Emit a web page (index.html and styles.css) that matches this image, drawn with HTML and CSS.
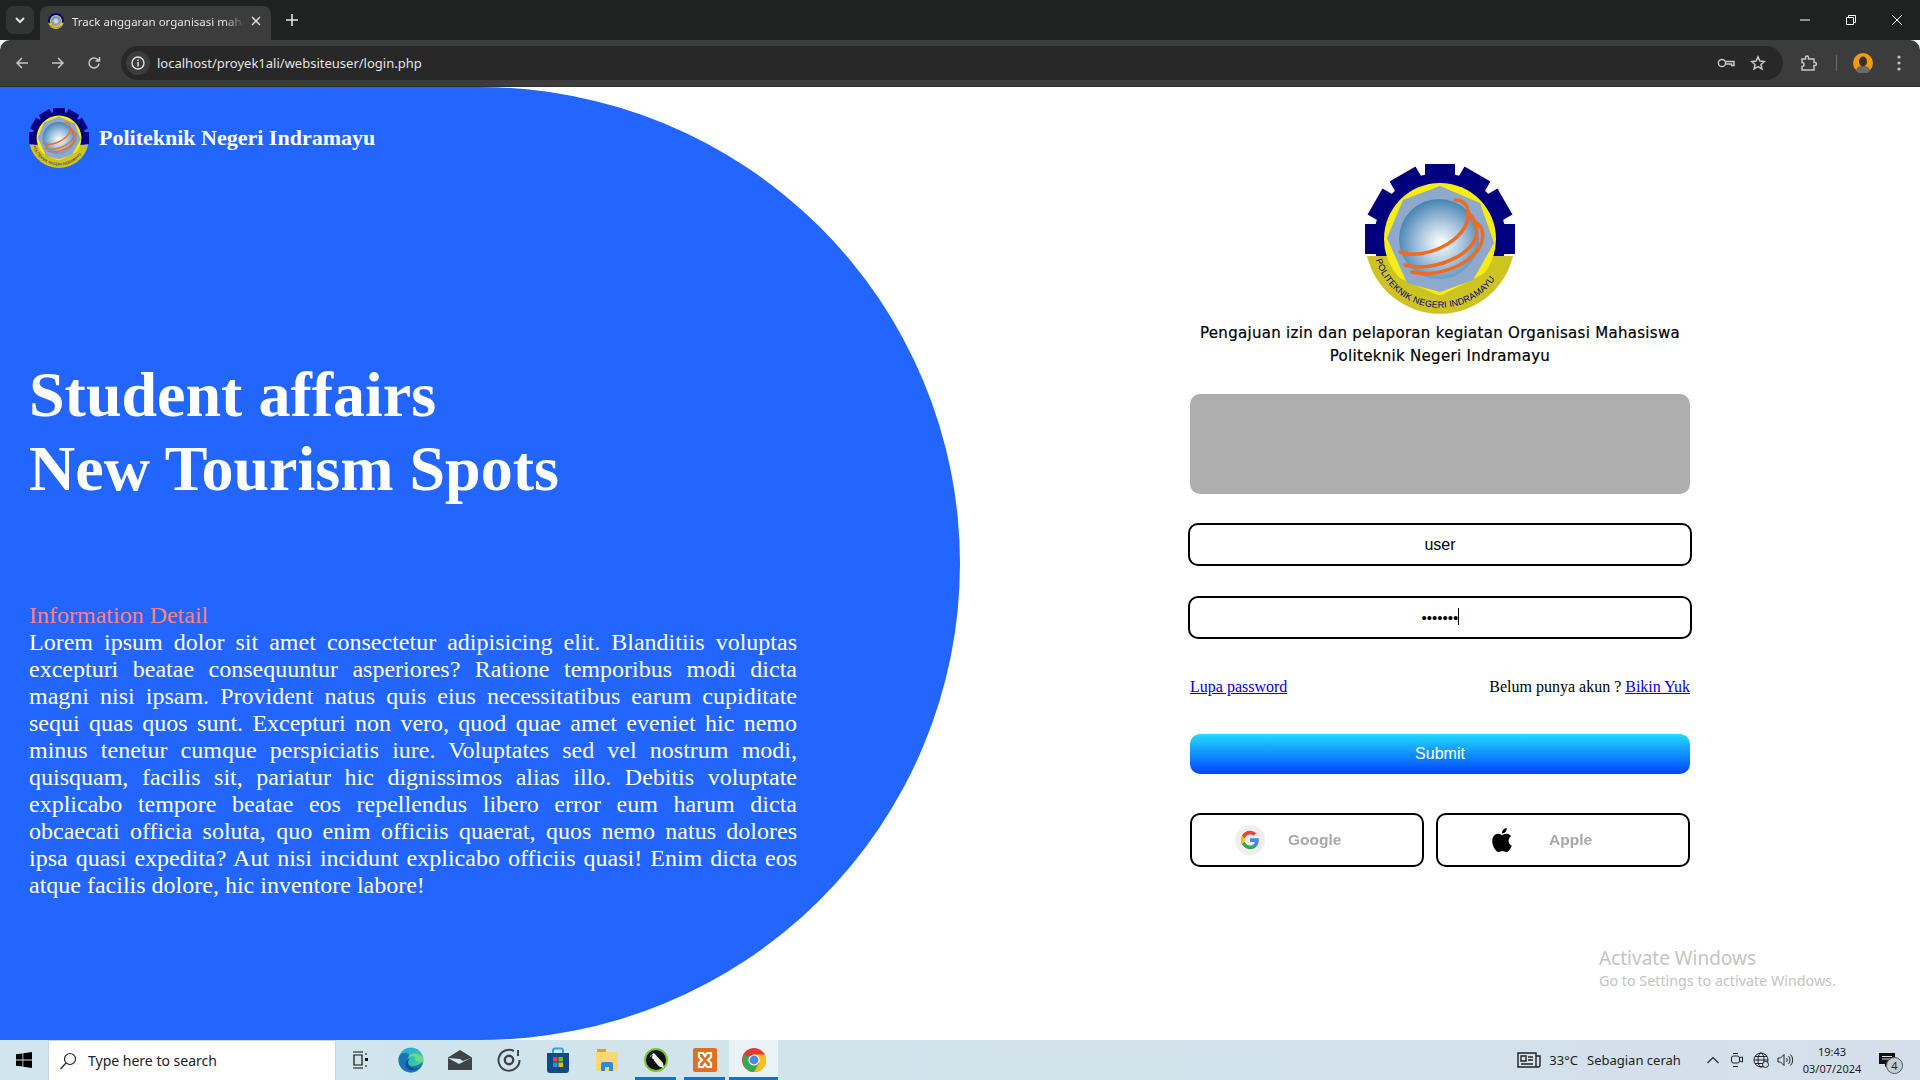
FILE: index.html
```html
<!DOCTYPE html>
<html>
<head>
    <title>Track anggaran organisasi mahasiswa</title>
    <link rel="stylesheet" href="styles.css">
</head>
<body>
    <svg class="defs" width="0" height="0">
        <defs>
            <radialGradient id="ball" cx="52%" cy="55%" r="60%">
                <stop offset="0%" stop-color="#ffffff"/>
                <stop offset="45%" stop-color="#a9c6de"/>
                <stop offset="100%" stop-color="#3477ad"/>
            </radialGradient>
            <path id="bandArc" d="M10 93 A67 67 0 0 0 140 93"/>
            <symbol id="poltekLogo" viewBox="0 0 150 150">
                <g fill="#00007f">
                    <circle cx="75" cy="75" r="66"/>
                    <rect x="60" y="0" width="30" height="20"/>
                    <rect x="60" y="0" width="30" height="20" transform="rotate(30 75 75)"/>
                    <rect x="60" y="0" width="30" height="20" transform="rotate(60 75 75)"/>
                    <rect x="60" y="0" width="30" height="20" transform="rotate(90 75 75)"/>
                    <rect x="60" y="0" width="30" height="20" transform="rotate(-30 75 75)"/>
                    <rect x="60" y="0" width="30" height="20" transform="rotate(-60 75 75)"/>
                    <rect x="60" y="0" width="30" height="20" transform="rotate(-90 75 75)"/>
                </g>
                <path fill="#cdc422" d="M2 92 L148 92 A75 75 0 0 1 2 92Z"/>
                <circle cx="75" cy="75" r="56" fill="#f7ec13"/>
                <path fill="#cdc422" d="M19 93 A58 58 0 0 0 131 93 L122 108 L75 132 L30 112Z"/>
                <polygon fill="#8ea9cb" points="75,22 115,39 129,79 108,116 75,128 42,119 22,74 38,36"/>
                <circle cx="74" cy="75" r="40" fill="url(#ball)"/>
                <g fill="none" stroke="#ee6b21" stroke-width="3.500" stroke-linecap="round">
                    <path d="M35 88C62 98 112 72 102 43 100 38 95 36 90 36"/>
                    <path d="M40 101C70 110 122 86 110 60 109 54 106 51 103 49"/>
                    <path d="M47 108C76 116 124 94 117 66 116 62 113 60 110 58"/>
                </g>
                <text class="band-text"><textPath href="#bandArc" startOffset="3" textLength="150">POLITEKNIK NEGERI INDRAMAYU</textPath></text>
            </symbol>
        </defs>
    </svg>

    <div class="tabstrip">
        <div class="tab-search">
            <svg width="12" height="12" viewBox="0 0 12 12"><path d="M2 4l4 4 4-4" fill="none" stroke="#e3e3e3" stroke-width="2"/></svg>
        </div>
        <div class="tab">
            <svg class="favicon" width="16" height="18"><use href="#poltekLogo"/></svg>
            <span class="tab-title">Track anggaran organisasi mahasiswa</span>
            <svg width="10" height="10" viewBox="0 0 10 10"><path d="M1 1l8 8M9 1l-8 8" stroke="#e3e3e3" stroke-width="1.4"/></svg>
        </div>
        <svg class="new-tab" width="12" height="12" viewBox="0 0 12 12"><path d="M6 0v12M0 6h12" stroke="#e3e3e3" stroke-width="1.6"/></svg>
        <div class="window-btns">
            <svg width="12" height="12" viewBox="0 0 12 12"><path d="M1 6h10" stroke="#fff"/></svg>
            <svg width="12" height="12" viewBox="0 0 12 12"><path d="M1.500 3.500h7v7h-7zM3.500 3.500v-2h7v7h-2" fill="none" stroke="#fff"/></svg>
            <svg width="12" height="12" viewBox="0 0 12 12"><path d="M1 1l10 10M11 1L1 11" stroke="#fff"/></svg>
        </div>
    </div>

    <div class="toolbar">
        <svg class="nav-icon" width="14" height="14" viewBox="0 0 14 14"><path d="M13 7H2M7 2L2 7l5 5" fill="none" stroke="#c7c7c7" stroke-width="1.5"/></svg>
        <svg class="nav-icon" width="14" height="14" viewBox="0 0 14 14"><path d="M1 7h11M7 2l5 5-5 5" fill="none" stroke="#c7c7c7" stroke-width="1.5"/></svg>
        <svg class="nav-icon" width="14" height="14" viewBox="0 0 14 14"><path d="M12 7.500A5 5 0 1 1 10.500 3.400L12.500 5M12.500 1v4h-4" fill="none" stroke="#c7c7c7" stroke-width="1.5"/></svg>
        <div class="omnibox">
            <div class="site-info">
                <svg width="14" height="14" viewBox="0 0 14 14"><circle cx="7" cy="7" r="6" fill="none" stroke="#e3e3e3" stroke-width="1.4"/><path d="M7 6v4.500M7 3.400v1.500" stroke="#e3e3e3" stroke-width="1.5"/></svg>
            </div>
            <span class="url">localhost/proyek1ali/websiteuser/login.php</span>
            <svg class="omni-key" width="18" height="12" viewBox="0 0 18 12"><circle cx="5" cy="6" r="3.600" fill="none" stroke="#c7c7c7" stroke-width="1.5"/><path d="M8.600 4.500H17v4h-2.500V7H8.600" fill="none" stroke="#c7c7c7" stroke-width="1.5"/></svg>
            <svg class="omni-star" width="16" height="16" viewBox="0 0 16 16"><path d="M8 1.800l1.900 4.200 4.500.5-3.400 3 1 4.500L8 11.700l-4 2.300 1-4.500-3.400-3 4.500-.5z" fill="none" stroke="#c7c7c7" stroke-width="1.5"/></svg>
        </div>
        <svg class="puzzle" width="16" height="16" viewBox="0 0 16 16"><path d="M1 4h3.500V2.500a1.500 1.500 0 0 1 3 0V4H13v3.500h1a1.500 1.500 0 0 1 0 3h-1V15H1v-3.500a2 2 0 0 0 0-4z" fill="none" stroke="#c7c7c7" stroke-width="1.5"/></svg>
        <div class="tool-sep"></div>
        <svg class="avatar" width="20" height="20" viewBox="0 0 20 20"><circle cx="10" cy="10" r="10" fill="#f59a0c"/><path d="M3 18c1-5 4-5 7-5s6 0 7 5a10 10 0 0 1-14 0z" fill="#6a6a6a"/><ellipse cx="10" cy="8.500" rx="4" ry="5" fill="#33302e"/></svg>
        <svg class="menu-dots" width="4" height="16" viewBox="0 0 4 16"><circle cx="2" cy="2" r="1.600" fill="#c7c7c7"/><circle cx="2" cy="8" r="1.600" fill="#c7c7c7"/><circle cx="2" cy="14" r="1.600" fill="#c7c7c7"/></svg>
    </div>

    <div class="page">
        <div class="left-panel">
            <div class="brand">
                <svg class="brand-logo" width="60" height="60"><use href="#poltekLogo"/></svg>
                <span class="brand-name">Politeknik Negeri Indramayu</span>
            </div>
            <h1 class="headline">Student affairs<br>New Tourism Spots</h1>
            <div class="info">
                <div class="info-title">Information Detail</div>
                <p class="info-text">Lorem ipsum dolor sit amet consectetur adipisicing elit. Blanditiis voluptas excepturi beatae consequuntur asperiores? Ratione temporibus modi dicta magni nisi ipsam. Provident natus quis eius necessitatibus earum cupiditate sequi quas quos sunt. Excepturi non vero, quod quae amet eveniet hic nemo minus tenetur cumque perspiciatis iure. Voluptates sed vel nostrum modi, quisquam, facilis sit, pariatur hic dignissimos alias illo. Debitis voluptate explicabo tempore beatae eos repellendus libero error eum harum dicta obcaecati officia soluta, quo enim officiis quaerat, quos nemo natus dolores ipsa quasi expedita? Aut nisi incidunt explicabo officiis quasi! Enim dicta eos atque facilis dolore, hic inventore labore!</p>
            </div>
        </div>

        <div class="right-panel">
            <svg class="main-logo" width="150" height="150"><use href="#poltekLogo"/></svg>
            <p class="intro">Pengajuan izin dan pelaporan kegiatan Organisasi Mahasiswa<br>Politeknik Negeri Indramayu</p>
            <form class="login-form">
                <div class="alert-box"></div>
                <input class="field field-user" type="text" value="user">
                <div class="pass-wrap">
                    <input class="field field-pass" type="password" value="1234567">
                    <span class="caret"></span>
                </div>
                <div class="links">
                    <a href="#">Lupa password</a>
                    <span>Belum punya akun ? <a href="#">Bikin Yuk</a></span>
                </div>
                <button class="submit-btn" type="button">Submit</button>
                <div class="social">
                    <button class="social-btn google" type="button">
                        <span class="g-badge">
                            <svg width="20" height="20" viewBox="0 0 24 24">
                                <path fill="#4285F4" d="M22.560 12.250c0-.780-.070-1.530-.200-2.250H12v4.260h5.920c-.260 1.370-1.040 2.530-2.210 3.310v2.770h3.570c2.080-1.920 3.280-4.740 3.280-8.090z"/>
                                <path fill="#34A853" d="M12 23c2.970 0 5.460-.980 7.280-2.660l-3.570-2.770c-.980.660-2.230 1.060-3.710 1.060-2.860 0-5.290-1.930-6.160-4.530H2.180v2.840C3.990 20.530 7.700 23 12 23z"/>
                                <path fill="#FBBC05" d="M5.840 14.090c-.220-.660-.350-1.360-.350-2.090s.130-1.430.350-2.090V7.070H2.180C1.430 8.550 1 10.220 1 12s.430 3.450 1.180 4.930l2.850-2.220.810-.620z"/>
                                <path fill="#EA4335" d="M12 5.380c1.620 0 3.060.560 4.210 1.640l3.150-3.150C17.450 2.090 14.970 1 12 1 7.700 1 3.990 3.470 2.180 7.070l3.660 2.840c.870-2.600 3.300-4.530 6.160-4.530z"/>
                            </svg>
                        </span>
                        <span class="social-label">Google</span>
                    </button>
                    <button class="social-btn apple" type="button">
                        <svg width="24" height="24" viewBox="0 0 24 24"><path d="M12.152 6.896c-.948 0-2.415-1.078-3.960-1.040-2.040.027-3.910 1.183-4.961 3.014-2.117 3.675-.546 9.103 1.519 12.090 1.013 1.454 2.208 3.090 3.792 3.039 1.520-.065 2.090-.987 3.935-.987 1.831 0 2.350.987 3.960.948 1.637-.026 2.676-1.480 3.676-2.948 1.156-1.688 1.636-3.325 1.662-3.415-.039-.013-3.182-1.221-3.220-4.857-.026-3.040 2.480-4.494 2.597-4.559-1.429-2.090-3.623-2.324-4.390-2.376-2-.156-3.675 1.090-4.610 1.090zM15.530 3.830c.843-1.012 1.400-2.427 1.245-3.830-1.207.052-2.662.805-3.532 1.818-.780.896-1.454 2.338-1.273 3.714 1.338.104 2.715-.688 3.559-1.701"/></svg>
                        <span class="social-label">Apple</span>
                    </button>
                </div>
            </form>
        </div>

        <div class="activate">
            <div class="activate-title">Activate Windows</div>
            <div class="activate-sub">Go to Settings to activate Windows.</div>
        </div>
    </div>

    <div class="taskbar">
        <div class="start">
            <svg width="16" height="16" viewBox="0 0 16 16"><path fill="#000" d="M0 2.300l6.500-.9v6.200H0zM7.300 1.300L16 0v7.600H7.300zM0 8.400h6.500v6.200L0 13.700zM7.300 8.400H16V16l-8.700-1.300z"/></svg>
        </div>
        <div class="search-box">
            <svg width="18" height="18" viewBox="0 0 18 18"><circle cx="11" cy="7" r="5.500" fill="none" stroke="#222" stroke-width="1.200"/><path d="M7 11l-5.500 6" stroke="#222" stroke-width="1.200"/></svg>
            <span>Type here to search</span>
        </div>
        <div class="task-icons">
            <div class="task-icon task-view">
                <svg width="16" height="18" viewBox="0 0 16 18"><path d="M1 1h10M1 17h10M2 4h8v10H2z" fill="none" stroke="#111" stroke-width="1.200"/><rect x="13" y="7" width="3" height="3" fill="#111"/><path d="M14 2v2M14 14v2" stroke="#111"/></svg>
            </div>
            <div class="task-icon">
                <svg width="26" height="26" viewBox="0 0 26 26">
                    <defs><linearGradient id="edgeG" x1="0" y1="0" x2="1" y2="1"><stop offset="0" stop-color="#2aa5e0"/><stop offset=".6" stop-color="#35c2b0"/><stop offset="1" stop-color="#7fdc5e"/></linearGradient></defs>
                    <circle cx="13" cy="13" r="12.500" fill="url(#edgeG)"/>
                    <path d="M25 15c-1 6-6 10.500-12 10.500C6 25.500 .5 20 .5 13 .5 9 3 6 6 6c3.500 0 7 1 5 4-2 2-3 4-1 7 2 3 9 3 15-2z" fill="#1b75bb"/>
                    <path d="M25.500 14.500c0-6-5-8-9-8-4 0-6.500 2.500-6.500 5 0-1 3-3 6-2 2 1 1.500 2.500 1 3.500 2 2 5.500 2.500 8.500 1.500z" fill="#6ad88a"/>
                    <path d="M21 20c-4 2.500-8 1.500-10-1.500-1.500-2.500-1-5.500.5-7-3 .5-5 4-3.500 8 2 5 9 5.500 13 .5z" fill="#0f4f96"/>
                </svg>
            </div>
            <div class="task-icon">
                <svg width="24" height="20" viewBox="0 0 24 20"><path fill="#3e4447" d="M12 0l12 7.500V20H0V7.500z"/><path d="M0 8l11 6 13-6.500-9 3.500-3-2z" fill="#d1e6ee"/></svg>
            </div>
            <div class="task-icon">
                <svg width="24" height="24" viewBox="0 0 24 24"><path d="M17 3a10.500 10.500 0 1 0 5.500 9" fill="none" stroke="#3e4447" stroke-width="2"/><path d="M21 2v6" stroke="#3e4447" stroke-width="2"/><circle cx="12" cy="12" r="4.200" fill="none" stroke="#3e4447" stroke-width="2.400"/></svg>
            </div>
            <div class="task-icon">
                <svg width="24" height="26" viewBox="0 0 24 26"><path d="M7 7V3.500A2 2 0 0 1 9 1.500h6a2 2 0 0 1 2 2V7" fill="none" stroke="#2fa6e8" stroke-width="2"/><path d="M1 6h22v17a3 3 0 0 1-3 3H4a3 3 0 0 1-3-3z" fill="#134a86"/><rect x="7" y="10" width="4.500" height="4.500" fill="#e8492b"/><rect x="12.500" y="10" width="4.500" height="4.500" fill="#71b81e"/><rect x="7" y="15.500" width="4.500" height="4.500" fill="#1c9be0"/><rect x="12.500" y="15.500" width="4.500" height="4.500" fill="#fbb40a"/></svg>
            </div>
            <div class="task-icon">
                <svg width="22" height="24" viewBox="0 0 22 24"><path d="M1 1h9v4H1z" fill="#d7a028"/><path d="M0 4h22v19H0z" fill="#f8d775"/><path d="M5 23v-7a2 2 0 0 1 2-2h8a2 2 0 0 1 2 2v7h-4v-4H9v4z" fill="#2c8dd6"/></svg>
            </div>
            <div class="task-icon is-open">
                <svg width="24" height="24" viewBox="0 0 24 24"><circle cx="12" cy="12" r="11" fill="#111" stroke="#7ac52c" stroke-width="2"/><path d="M6 8l4-3 9 10 1 5-5-1.500z" fill="#e9efe6"/><path d="M8 7l-1 5 2-1 1 3 4 4" fill="none" stroke="#111"/></svg>
            </div>
            <div class="task-icon is-open">
                <svg width="24" height="24" viewBox="0 0 24 24"><rect width="24" height="24" rx="2" fill="#e0701f"/><path d="M6 5h4l2 3 2-3h4v4l-3 3 3 3v4h-4l-2-3-2 3H6v-4l3-3-3-3z" fill="none" stroke="#fff" stroke-width="2.200"/></svg>
            </div>
            <div class="task-icon is-open is-active">
                <svg width="24" height="24" viewBox="0 0 24 24"><circle cx="12" cy="12" r="12" fill="#e33b2e"/><path d="M12 12L1.600 6 .5 13C1 19 6 24 12 24l5-6z" fill="#35a853"/><path d="M12 6.500h11A12 12 0 0 1 12 24l5.200-9z" fill="#fbc116"/><circle cx="12" cy="12" r="5.600" fill="#fff"/><circle cx="12" cy="12" r="4.400" fill="#4a8af4"/></svg>
            </div>
        </div>
        <div class="tray">
            <svg class="tray-news" width="24" height="16" viewBox="0 0 24 16"><path d="M1 1h18v14H1zM19 4h4v9a2 2 0 0 1-2 2h-2M4 4h5v5H4zM11 5h5M11 8h5M4 12h12" fill="none" stroke="#222" stroke-width="1.400"/></svg>
            <span class="tray-temp">33°C</span>
            <span class="tray-weather">Sebagian cerah</span>
            <svg class="tray-chevron" width="12" height="8" viewBox="0 0 12 8"><path d="M0.500 7l5.500-5.500L11.500 7" fill="none" stroke="#222" stroke-width="1.200"/></svg>
            <svg class="tray-meet" width="12" height="16" viewBox="0 0 12 16"><rect x=".5" y="4" width="8" height="7" rx="2" fill="none" stroke="#222"/><path d="M8.500 6l3-1v5l-3-1M2 1.500h5M2 14.500h5" fill="none" stroke="#222"/></svg>
            <svg class="tray-globe" width="16" height="16" viewBox="0 0 16 16"><circle cx="8" cy="8" r="7" fill="none" stroke="#222"/><ellipse cx="8" cy="8" rx="3" ry="7" fill="none" stroke="#222"/><path d="M1 8h14M2 4.500h12M2 11.500h12" stroke="#222"/><circle cx="12.500" cy="12.500" r="3" fill="#d3e0eb" stroke="#222"/></svg>
            <svg class="tray-sound" width="16" height="14" viewBox="0 0 16 14"><path d="M1 5h2.500L7 1.500v11L3.500 9H1zM9.500 5a3 3 0 0 1 0 4M11.500 3a6 6 0 0 1 0 8M13.500 1.500a8 8 0 0 1 0 11" fill="none" stroke="#222"/></svg>
            <div class="tray-clock"><div>19:43</div><div>03/07/2024</div></div>
            <div class="tray-notify">
                <svg width="16" height="14" viewBox="0 0 16 14"><path d="M0 0h16v11H9l-3 3v-3H0z" fill="#111"/><path d="M3 3.500h10M3 6h10" stroke="#d3e0eb"/></svg>
                <span class="notify-badge">4</span>
            </div>
        </div>
    </div>
</body>
</html>
```

FILE: styles.css
```css
* { box-sizing: border-box; }
html, body { margin: 0; padding: 0; }
body { width: 1920px; height: 1080px; overflow: hidden; display: flex; flex-direction: column; font-family: "Liberation Serif", serif; background: #fff; }
.defs { position: absolute; }
.band-text { font-family: "Liberation Sans", sans-serif; font-size: 9px; fill: #00007f; }

/* browser chrome */
.tabstrip { height: 40px; background: #202221; display: flex; align-items: flex-start; font-family: "Noto Sans", sans-serif; }
.tab-search { width: 28px; height: 28px; margin: 6px 0 0 6px; background: #333534; border-radius: 8px; display: flex; align-items: center; justify-content: center; }
.tab { width: 231px; height: 34px; margin: 6px 0 0 6px; background: #3c3c3c; border-radius: 8px 8px 0 0; display: flex; align-items: center; padding: 0 10px 4px 8px; }
.favicon { margin-right: 8px; flex: none; }
.tab-title { flex: 1; font-size: 11.500px; color: #e3e3e3; white-space: nowrap; overflow: hidden; -webkit-mask-image: linear-gradient(to right, #000 88%, transparent); mask-image: linear-gradient(to right, #000 88%, transparent); margin-right: 6px; }
.new-tab { margin: 14px 0 0 15px; }
.window-btns { margin-left: auto; display: flex; padding: 14px 17px 0 0; gap: 34px; }
.toolbar { height: 47px; background: #3c3c3c; border-bottom: 1px solid #2e2e2e; display: flex; align-items: center; border-radius: 10px 10px 0 0; font-family: "Noto Sans", sans-serif; padding-left: 15px; }
.nav-icon { margin-right: 22px; flex: none; }
.omnibox { width: 1662px; height: 34px; margin-left: -2px; background: #282828; border-radius: 17px; display: flex; align-items: center; padding: 0 17px 0 5px; }
.site-info { width: 24px; height: 24px; border-radius: 50%; background: #3c3c3c; display: flex; align-items: center; justify-content: center; margin-right: 7px; }
.url { font-size: 13px; color: #e3e3e3; flex: 1; }
.omni-key { margin-right: 15px; }
.puzzle { margin-left: 18px; }
.tool-sep { width: 1px; height: 16px; background: #6a6a6a; margin-left: 19px; }
.avatar { margin-left: 16px; }
.menu-dots { margin-left: 24px; }

/* page */
.page { flex: 1; display: flex; position: relative; min-height: 0; }
.left-panel { width: 960px; background: #2266ff; border-radius: 0 50% 50% 0; color: #fff; padding: 20px 0 0 29px; }
.brand { display: flex; align-items: center; height: 62px; }
.brand-logo { flex: none; }
.brand-name { font-size: 22px; font-weight: bold; margin-left: 10px; }
.headline { font-size: 64px; line-height: 74px; margin: 189px 0 0; font-weight: bold; }
.info { margin-top: 96px; width: 768px; font-size: 24px; }
.info-title { color: #ff8080; }
.info-text { margin: 0; text-align: justify; line-height: 27px; }

.right-panel { flex: 1; display: flex; flex-direction: column; align-items: center; padding-top: 77px; }
.main-logo { display: block; }
.intro { margin: 8px 0 0; font-family: "DejaVu Sans", sans-serif; font-size: 15px; line-height: 23px; letter-spacing: .3px; -webkit-text-stroke: .2px #000; text-align: center; color: #000; }
.login-form { width: 500px; margin-top: 26px; display: flex; flex-direction: column; align-items: center; }
.alert-box { width: 500px; height: 100px; background: #aeaeae; border-radius: 10px; }
.field { display: block; width: 504px; height: 43px; border: 2.5px solid #000; border-radius: 10px; background: #fff; font-family: "Liberation Sans", sans-serif; font-size: 16px; color: #000; text-align: center; outline: none; padding: 0 10px; }
.field-user { margin-top: 29px; }
.pass-wrap { position: relative; margin-top: 30px; }
.field-pass { font-size: 15px; }
.caret { position: absolute; left: calc(50% + 18px); top: 12px; width: 1px; height: 17px; background: #000; }
.links { width: 500px; margin-top: 39px; display: flex; justify-content: space-between; font-size: 16px; line-height: 18px; color: #000; }
.links a { color: #0000ee; }
.submit-btn { width: 500px; height: 40px; margin-top: 38px; border: none; border-radius: 10px; background: linear-gradient(to bottom, #22dbff, #0044ff); color: #fff; font-family: "Liberation Sans", sans-serif; font-size: 16px; }
.social { width: 500px; margin-top: 39px; display: flex; gap: 12px; }
.social-btn { height: 54px; border: 2.5px solid #000; border-radius: 10px; background: #fff; display: flex; align-items: center; padding: 0; }
.google { width: 234px; padding-left: 43px; }
.apple { width: 254px; padding-left: 52px; }
.g-badge { width: 30px; height: 30px; border-radius: 50%; background: #eeeeee; display: flex; align-items: center; justify-content: center; filter: blur(.4px); }
.apple svg { filter: blur(.4px); }
.social-label { font-family: "Liberation Sans", sans-serif; font-weight: bold; font-size: 15.500px; color: #a8a8a8; filter: blur(.5px); }
.google .social-label { margin-left: 23px; }
.apple .social-label { margin-left: 35px; }

.activate { position: absolute; left: 1599px; top: 858px; color: #c4c4c4; font-family: "Noto Sans", sans-serif; }
.activate-title { font-size: 19px; line-height: 26px; }
.activate-sub { font-size: 14.300px; line-height: 20px; }

/* taskbar */
.taskbar { height: 40px; display: flex; align-items: center; background: linear-gradient(to right, #d0e5ee, #d1e4ec 40%, #d4dfeb); font-family: "Noto Sans", sans-serif; color: #111; }
.start { width: 48px; display: flex; justify-content: center; }
.search-box { width: 288px; height: 40px; background: #fff; border: 1px solid #c9d6dc; border-width: 1px 1px 0 1px; display: flex; align-items: center; padding-left: 10px; font-size: 14px; color: #222; }
.search-box span { margin-left: 11px; }
.task-icons { display: flex; margin-left: 1px; height: 40px; }
.task-icon { width: 49px; height: 40px; display: flex; align-items: center; justify-content: center; }
.task-view svg { margin-right: 4px; }
.is-open { box-shadow: inset 0 -3px 0 #0078d4; border-left: 4px solid transparent; border-right: 4px solid transparent; background-clip: padding-box; }
.is-active { background-color: #e9f2f6; border: none; }
.tray { margin-left: auto; display: flex; align-items: center; height: 40px; font-size: 13px; color: #222; padding-right: 25px; }
.tray-temp { margin-left: 8px; }
.tray-weather { margin-left: 9px; width: 120px; }
.tray-chevron { margin-right: 12px; }
.tray-meet { margin-right: 10px; }
.tray-globe { margin-right: 8px; }
.tray-sound { margin-right: 8px; }
.tray-clock { width: 62px; text-align: center; font-size: 11px; line-height: 17px; }
.tray-notify { position: relative; margin-left: 16px; width: 16px; height: 14px; }
.tray-notify svg { display: block; }
.notify-badge { position: absolute; left: 7px; top: 4px; width: 17px; height: 17px; border-radius: 50%; background: #c4ced6; border: 1px solid #555; font-size: 11px; line-height: 15px; text-align: center; }
```
